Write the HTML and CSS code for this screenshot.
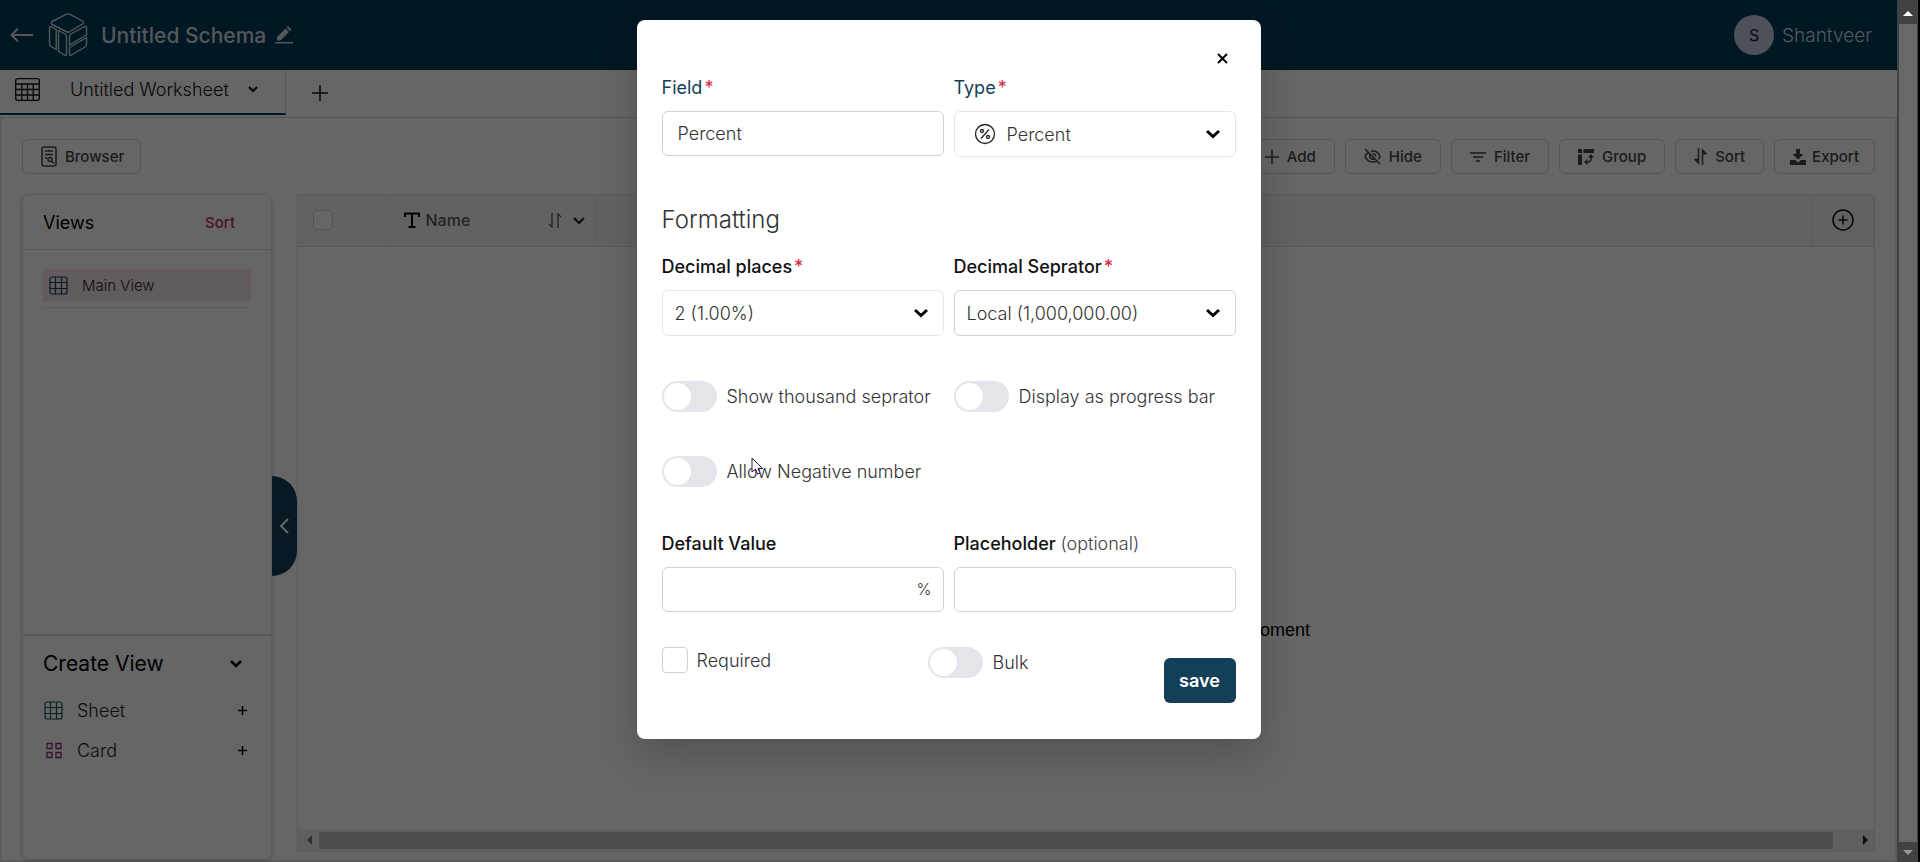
FILE: index.html
```html
<!DOCTYPE html>
<html lang="en">
<head>
  <meta charset="UTF-8" />
  <meta name="viewport" content="width=device-width, initial-scale=1" />
  <title>Untitled Schema</title>
  <link rel="stylesheet" href="styles.css">
</head>
<body>
  <div class="app">
    <header class="topbar">
      <button type="button" class="icon-btn" aria-label="Back">
        <svg width="24" height="16" viewBox="0 0 24 16" fill="none" stroke="currentColor" stroke-width="2"><path d="M23 8H2M8 1.5L1.5 8L8 14.5"/></svg>
      </button>
      <svg class="logo" width="40" height="44" viewBox="0 0 40 44" fill="none" stroke="currentColor" stroke-width="1.4" stroke-linejoin="round">
        <path d="M18.5 1.2Q20 .5 21.5 1.2L34.5 8Q36.5 9.500 34.500 11L21 19Q20 19.500 19 19L4 11.500Q2.500 10 4 8.500Z"/>
        <path d="M1.500 15Q1.500 13.200 3 13.800L8.200 16.500V36.500L3 33.500Q1.500 32.500 1.500 31Z"/>
        <path d="M10.500 17.500L17 21Q18.500 22 18.500 24V41Q18.500 43 16.500 42L10.500 38.500Z"/>
        <path d="M21.500 23.500Q21.500 22 23 21L36.500 13.500Q38.500 12.800 38.500 15V22L21.500 32Z"/>
        <path d="M21.500 34.500L38.500 24.500V31Q38.500 33 37 34L23.500 42Q21.500 42.800 21.500 41Z"/>
      </svg>
      <h1>Untitled Schema</h1>
      <button type="button" class="icon-btn" aria-label="Rename">
        <svg width="18" height="18" viewBox="0 0 18 18" fill="currentColor"><path d="M2 14.500V11L10.500 2.500L14 6L5.500 14.500ZM11.500 1.500L13 0L16.500 3.500L15 5ZM0 16H18V17.600H0Z"/></svg>
      </button>
      <div class="user">
        <span class="avatar">S</span>
        <span>Shantveer</span>
      </div>
    </header>

    <nav class="tabs">
      <div class="tab">
        <svg width="25" height="23" viewBox="0 0 25 23" fill="none" stroke="currentColor" stroke-width="1.3"><rect x=".7" y=".7" width="23.600" height="21.600" rx="2"/><path d="M1 6H24M1 11.500H24M1 17H24M6.800 6V22M12.500 6V22M18.200 6V22"/></svg>
        <span class="tab-name">Untitled Worksheet</span>
        <svg width="10" height="7" viewBox="0 0 10 7" fill="none" stroke="#000" stroke-width="2"><path d="M1 1L5 5L9 1"/></svg>
      </div>
      <button type="button" class="icon-btn add-tab" aria-label="Add worksheet">
        <svg width="16" height="16" viewBox="0 0 16 16" stroke="currentColor" stroke-width="1.500"><path d="M8 0V16M0 8H16"/></svg>
      </button>
    </nav>

    <main class="content">
      <div class="toolbar">
        <button type="button" class="tool browser">
          <svg width="16" height="21" viewBox="0 0 16 21" fill="none" stroke="currentColor" stroke-width="1.500"><rect x="1" y="1" width="14" height="19" rx="2"/><path d="M4 5H12M4 8.500H12M4 12H6"/><circle cx="9" cy="13.500" r="2"/><path d="M10.500 15L13 17.500"/></svg>
          Browser
        </button>
        <div class="tool-group">
          <button type="button" class="tool">
            <svg width="14" height="14" viewBox="0 0 14 14" stroke="currentColor" stroke-width="1.500"><path d="M7 0V14M0 7H14"/></svg>
            Add
          </button>
          <button type="button" class="tool">
            <svg width="17" height="17" viewBox="0 0 17 17" fill="none" stroke="currentColor" stroke-width="1.500"><path d="M1 1L16 16M5 4Q2 5.500 1 8.500Q3.500 14 8.500 14Q11 14 12.500 12.800M6.800 3.200Q13.500 2 16 8.500Q15.500 10 14.200 11.300M6 6.500Q5 9 7 10.700Q8.500 11.800 10.300 10.800M8.500 5.400Q11.500 5.700 11.600 8.500"/></svg>
            Hide
          </button>
          <button type="button" class="tool">
            <svg width="16" height="10" viewBox="0 0 16 10" stroke="currentColor" stroke-width="1.500"><path d="M0 1H16M3 5H13M6 9H10"/></svg>
            Filter
          </button>
          <button type="button" class="tool">
            <svg width="16" height="16" viewBox="0 0 16 16" fill="currentColor"><path d="M0 0H4V4H0ZM5.500 0H16V4H5.500ZM0 5.500H4V16H0Z"/><path d="M13 6.500V10Q13 13 9 13H7" fill="none" stroke="currentColor" stroke-width="1.500"/><path d="M10 8.500L13 5L16 8.500ZM9.500 10V16L6 13Z"/></svg>
            Group
          </button>
          <button type="button" class="tool">
            <svg width="13" height="17" viewBox="0 0 13 17" fill="currentColor" stroke="currentColor" stroke-width="1.500"><path d="M4.500 0V15L1 11.500H4.500M8.500 17V2L12 5.500H8.500"/></svg>
            Sort
          </button>
          <button type="button" class="tool export">
            <svg width="16" height="16" viewBox="0 0 16 16" fill="currentColor"><path d="M6 0H10V5H13.500L8 10.500L2.500 5H6ZM0 11H5L8 13.500L11 11H16V16H0Z"/></svg>
            Export
          </button>
        </div>
      </div>

      <div class="workspace">
        <aside class="sidebar">
          <div class="views-head">
            <h2>Views</h2>
            <button type="button" class="link-btn">Sort</button>
          </div>
          <div class="views-list">
            <a href="#" class="view-item">
              <svg width="19" height="19" viewBox="0 0 19 19" fill="none" stroke="#143f59" stroke-width="1.200"><rect x="1" y="1" width="17" height="17" rx="2"/><path d="M1 6.500H18M1 12.500H18M6.500 1V18M12.500 1V18"/></svg>
              Main View
            </a>
          </div>
          <div class="create">
            <div class="create-head">
              <h3>Create View</h3>
              <svg width="12" height="9" viewBox="0 0 12 9" fill="none" stroke="#000" stroke-width="2.500"><path d="M1 2L6 7L11 2"/></svg>
            </div>
            <div class="create-row">
              <svg width="19" height="19" viewBox="0 0 19 19" fill="none" stroke="#14505a" stroke-width="1.200"><rect x="1" y="1" width="17" height="17" rx="2"/><path d="M1 6.500H18M1 12.500H18M6.500 1V18M12.500 1V18"/></svg>
              <span>Sheet</span>
              <button type="button" class="icon-btn" aria-label="Create sheet"><svg width="9" height="9" viewBox="0 0 9 9" stroke="#000" stroke-width="1.500"><path d="M4.500 0V9M0 4.500H9"/></svg></button>
            </div>
            <div class="create-row">
              <svg width="19" height="19" viewBox="0 0 19 19" fill="none" stroke="#8c2c78" stroke-width="1.300"><path d="M3 2.500H8V7.500H3ZM12 2.500H17V7.500H12ZM3 11.500H8V16.500H3ZM12 11.500H17V16.500H12Z"/></svg>
              <span>Card</span>
              <button type="button" class="icon-btn" aria-label="Create card"><svg width="9" height="9" viewBox="0 0 9 9" stroke="#000" stroke-width="1.500"><path d="M4.500 0V9M0 4.500H9"/></svg></button>
            </div>
          </div>
        </aside>

        <button type="button" class="collapse" aria-label="Collapse views">
          <svg width="10" height="16" viewBox="0 0 10 16" fill="none" stroke="#fff" stroke-width="2"><path d="M9 1L2 8L9 15"/></svg>
        </button>

        <section class="sheet">
          <table class="grid">
            <thead>
              <tr>
                <th class="col-check"><input type="checkbox" class="check small" aria-label="Select all rows"></th>
                <th class="col-name">
                  <div class="name-cell">
                    <svg width="16" height="16" viewBox="0 0 16 16" fill="none" stroke="#000" stroke-width="2"><path d="M1 5V1.500H15V5M8 1.500V15M4.500 15H11.500"/></svg>
                    <span>Name</span>
                    <svg width="14" height="15" viewBox="0 0 14 15" fill="none" stroke="currentColor" stroke-width="1.300"><path d="M4 0V14L1 11M10 15V1L13 4"/></svg>
                    <svg width="12" height="9" viewBox="0 0 12 9" fill="none" stroke="#222" stroke-width="2.200"><path d="M1 2L6 7L11 2"/></svg>
                  </div>
                </th>
                <th></th>
                <th class="col-add">
                  <button type="button" class="icon-btn" aria-label="Add field">
                    <svg width="22" height="22" viewBox="0 0 22 22" fill="none" stroke="#111" stroke-width="1.500"><circle cx="11" cy="11" r="10"/><path d="M11 6.500V15.500M6.500 11H15.500"/></svg>
                  </button>
                </th>
              </tr>
            </thead>
          </table>
          <p class="empty">There are no records available to display at this moment</p>
          <div class="hscroll">
            <span class="arrow-left"></span>
            <span class="hthumb"></span>
            <span class="arrow-right"></span>
          </div>
        </section>
      </div>
    </main>

    <div class="overlay">
      <form class="modal" novalidate>
        <div class="modal-close">
          <button type="button" class="icon-btn" aria-label="Close">
            <svg width="11" height="11" viewBox="0 0 11 11" stroke="#000" stroke-width="2"><path d="M1 1L10 10M10 1L1 10"/></svg>
          </button>
        </div>

        <div class="grid-2">
          <div>
            <label class="label blue" for="field">Field<span class="req">*</span></label>
            <input id="field" class="control strong" type="text" value="Percent" autocomplete="off">
          </div>
          <div>
            <label class="label blue" for="type">Type<span class="req">*</span></label>
            <div class="select-wrap">
              <select id="type" class="control with-icon"><option>Percent</option></select>
              <svg class="type-icon" width="22" height="22" viewBox="0 0 22 22" fill="none" stroke="#222" stroke-width="1.300"><circle cx="11" cy="11" r="9.500"/><circle cx="8" cy="8" r="1.500"/><circle cx="14" cy="14" r="1.500"/><path d="M15 6.500L7 15.500"/></svg>
              <svg class="chevron" width="14" height="10" viewBox="0 0 14 10" fill="none" stroke="#000" stroke-width="3"><path d="M1 2L7 7.500L13 2"/></svg>
            </div>
          </div>
        </div>

        <h2 class="section-title">Formatting</h2>

        <div class="grid-2">
          <div>
            <label class="label" for="places">Decimal places<span class="req">*</span></label>
            <div class="select-wrap">
              <select id="places" class="control"><option>2 (1.00%)</option></select>
              <svg class="chevron" width="14" height="10" viewBox="0 0 14 10" fill="none" stroke="#000" stroke-width="3"><path d="M1 2L7 7.500L13 2"/></svg>
            </div>
          </div>
          <div>
            <label class="label" for="separator">Decimal Seprator<span class="req">*</span></label>
            <div class="select-wrap">
              <select id="separator" class="control strong"><option>Local (1,000,000.00)</option></select>
              <svg class="chevron" width="14" height="10" viewBox="0 0 14 10" fill="none" stroke="#000" stroke-width="3"><path d="M1 2L7 7.500L13 2"/></svg>
            </div>
          </div>
        </div>

        <div class="grid-2 toggles">
          <label class="toggle-row"><input type="checkbox" class="toggle">Show thousand seprator</label>
          <label class="toggle-row"><input type="checkbox" class="toggle">Display as progress bar</label>
          <label class="toggle-row"><input type="checkbox" class="toggle">Allow Negative number</label>
        </div>

        <div class="grid-2">
          <div>
            <label class="label" for="default">Default Value</label>
            <div class="select-wrap">
              <input id="default" class="control strong" type="text" autocomplete="off">
              <span class="suffix">%</span>
            </div>
          </div>
          <div>
            <label class="label" for="placeholder">Placeholder <span class="optional">(optional)</span></label>
            <input id="placeholder" class="control strong" type="text" autocomplete="off">
          </div>
        </div>

        <div class="modal-foot">
          <label class="required"><input type="checkbox" class="check">Required</label>
          <label class="toggle-row"><input type="checkbox" class="toggle">Bulk</label>
          <button type="submit" class="save">save</button>
        </div>

        <svg class="cursor" width="14" height="19" viewBox="0 0 14 19" fill="#fff" stroke="#1f1b4d" stroke-width="1"><path d="M1 1V15L4.500 12L6.500 17L9 16L7 11.500H11.500Z"/></svg>
      </form>
    </div>
  </div>

  <div class="vscroll">
    <span class="arrow-up"></span>
    <span class="vthumb"></span>
    <span class="arrow-down"></span>
  </div>
</body>
</html>
```

FILE: styles.css
```css
/* Reset and base */
* {
  box-sizing: border-box;
}
body {
  margin: 0;
  display: flex;
  height: 100vh;
  overflow: hidden;
  font-family: Inter, "Open Sans", sans-serif;
  font-size: 18px;
  font-weight: 300;
  color: #222;
  background: #000;
}
h1, h2, h3, p {
  margin: 0;
}
svg {
  display: block;
  flex: none;
}
button, input, select {
  font: inherit;
  color: inherit;
}
button {
  cursor: pointer;
}
.icon-btn {
  display: flex;
  padding: 0;
  border: none;
  background: none;
}
.app {
  position: relative;
  flex: 1;
  display: flex;
  flex-direction: column;
  background: #fff;
}

/* Header */
.topbar {
  height: 70px;
  padding: 0 25px 0 10px;
  display: flex;
  align-items: center;
  background: #003c5a;
  color: #d5dae2;
}
.logo {
  margin: 0 13px 0 14px;
}
.topbar h1 {
  margin-right: 9px;
  font-size: 21px;
  font-weight: 500;
}
.user {
  margin-left: auto;
  display: flex;
  align-items: center;
  gap: 8px;
  font-size: 19px;
}
.avatar {
  width: 40px;
  height: 40px;
  border-radius: 50%;
  background: #c3c9e0;
  color: #111827;
  font-size: 16px;
  font-weight: 400;
  line-height: 40px;
  text-align: center;
}

/* Worksheet tabs */
.tabs {
  height: 48px;
  display: flex;
  border-bottom: 1px solid #d1d5db;
}
.tab {
  width: 286px;
  height: 45px;
  padding: 0 27px 5px 15px;
  display: flex;
  align-items: center;
  border-bottom: 2px solid #003c5a;
  border-right: 1px solid #d1d5db;
  color: #111;
}
.tab-name {
  flex: 1;
  padding-left: 30px;
}
.add-tab {
  align-items: center;
  padding: 0 0 2px 26px;
  color: #111;
}

/* Toolbar */
.content {
  flex: 1;
  min-height: 0;
  display: flex;
  flex-direction: column;
  padding: 21px 20px 0;
  border: 2px solid #e5e7eb;
  border-top: none;
}
.toolbar {
  display: flex;
  justify-content: space-between;
}
.tool-group {
  display: flex;
  gap: 10px;
}
.tool {
  height: 35px;
  padding: 0 18px;
  display: flex;
  align-items: center;
  gap: 8px;
  border: 1px solid #d1d5db;
  border-radius: 6px;
  background: #fff;
  color: #444;
  font-size: 15px;
  font-weight: 500;
}
.browser {
  padding: 0 16px 0 18px;
}
.export {
  padding: 0 15px;
  gap: 6px;
}

/* Sidebar */
.workspace {
  flex: 1;
  min-height: 0;
  display: flex;
  margin-top: 20px;
}
.sidebar {
  width: 250px;
  display: flex;
  flex-direction: column;
  border: 1px solid #e5e7eb;
  border-radius: 8px;
  box-shadow: 0 2px 4px rgba(0, 0, 0, 0.2);
}
.views-head {
  height: 55px;
  padding: 0 36px 0 20px;
  display: flex;
  align-items: center;
  justify-content: space-between;
  border-bottom: 1px solid #d9dbdf;
}
.views-head h2 {
  font-size: 18px;
  font-weight: 400;
  color: #000;
}
.link-btn {
  padding: 0;
  border: none;
  background: none;
  color: #c8285a;
  font-size: 15px;
  font-weight: 500;
}
.views-list {
  flex: 1;
  padding: 19px 20px;
}
.view-item {
  height: 33px;
  padding: 0 6px;
  display: flex;
  align-items: center;
  gap: 14px;
  background: #f5e6ea;
  color: #222;
  font-size: 15px;
  text-decoration: none;
  box-shadow: 0 5px 0 #fff, 0 6px 0 #e5e7eb;
}
.create {
  height: 225px;
  padding: 12px 20px 0;
  border-top: 2px solid #d9dbdf;
}
.create-head {
  height: 30px;
  padding-right: 9px;
  display: flex;
  align-items: center;
  justify-content: space-between;
}
.create-head h3 {
  font-size: 21px;
  font-weight: 400;
  color: #000;
}
.create-row {
  height: 40px;
  padding: 0 4px 0 1px;
  display: flex;
  align-items: center;
  gap: 14px;
}
.create-head + .create-row {
  margin-top: 12px;
}
.create-row span {
  flex: 1;
}
.collapse {
  align-self: flex-start;
  width: 25px;
  height: 100px;
  margin-top: 282px;
  padding: 0 0 0 7px;
  border: none;
  border-radius: 0 25px 25px 0;
  background: #143f59;
}

/* Table */
.sheet {
  flex: 1;
  display: flex;
  flex-direction: column;
  margin-bottom: 8px;
  border: 1px solid #e5e7eb;
}
.grid {
  width: 100%;
  table-layout: fixed;
  border-collapse: collapse;
  background: #f6f6f6;
}
.grid th {
  height: 51px;
  padding: 0;
  border-right: 1px solid #e5e7eb;
  border-bottom: 1px solid #dcdcdc;
  text-align: left;
}
.col-check {
  width: 88px;
}
.col-check .check {
  display: block;
  margin-left: 15px;
}
.col-name {
  width: 210px;
}
.name-cell {
  display: flex;
  align-items: center;
  gap: 6px;
  padding: 0 11px 0 17px;
  color: #555;
  font-size: 16px;
  font-weight: 500;
}
.name-cell span {
  flex: 1;
}
.name-cell svg:last-child {
  margin-left: 5px;
}
.col-add {
  width: 62px;
}
.col-add .icon-btn {
  margin: 0 auto;
}
.empty {
  flex: 1;
  display: flex;
  align-items: center;
  justify-content: center;
  padding-top: 186px;
  font-family: "Liberation Sans", Arial, sans-serif;
  font-size: 18px;
  font-weight: 400;
  color: #000;
}
.hscroll {
  height: 22px;
  padding: 0 6px 0 9px;
  display: flex;
  align-items: center;
  background: #f1f1f1;
}
.arrow-left, .arrow-right {
  border: 5px solid transparent;
  border-left-width: 0;
  border-right: 5px solid #777;
}
.arrow-right {
  border-left: 5px solid #222;
  border-right-width: 0;
}
.hthumb {
  flex: 1;
  height: 17px;
  margin: 0 30px 0 7px;
  background: #bdbdbd;
}

/* Modal */
.overlay {
  position: absolute;
  inset: 0;
  padding: 20px;
  display: flex;
  justify-content: center;
  align-items: flex-start;
  background: rgba(0, 0, 0, 0.6);
}
.modal {
  position: relative;
  width: 100%;
  max-width: 624px;
  padding: 26px 25px 36px;
  border-radius: 8px;
  background: #fff;
  box-shadow: 0 16px 40px rgba(0, 0, 0, 0.2);
}
.modal-close {
  height: 30px;
  padding: 7px 8px 0;
  display: flex;
  justify-content: flex-end;
}
.grid-2 {
  display: grid;
  grid-template-columns: 1fr 1fr;
  gap: 44px 10px;
}
.label {
  display: block;
  margin-bottom: 11px;
  font-size: 18px;
  font-weight: 500;
  line-height: 24px;
  color: #111;
}
.blue {
  color: #143f59;
  font-weight: 400;
}
.req {
  margin-left: 2px;
  color: #dc2646;
}
.optional {
  font-weight: 300;
  color: #444;
}
.control {
  display: block;
  width: 100%;
  height: 46px;
  padding: 0 15px;
  border: 1px solid #e5e7eb;
  border-radius: 6px;
  background: #fff;
  color: #333;
  font-size: 18px;
}
input.control {
  height: 45px;
}
select.control {
  appearance: none;
  padding: 0 12px;
}
.strong {
  border-color: #cfd1d6;
}
.select-wrap {
  position: relative;
}
select.with-icon {
  padding-left: 52px;
}
.type-icon {
  position: absolute;
  left: 20px;
  top: 12px;
  pointer-events: none;
}
.chevron {
  position: absolute;
  right: 16px;
  top: 18px;
  pointer-events: none;
}
.suffix {
  position: absolute;
  right: 12px;
  top: 12px;
  font-size: 16px;
  color: #333;
}
.section-title {
  margin: 47px 0 19px;
  font-size: 24px;
  font-weight: 300;
  line-height: 32px;
  color: #333;
}
.toggles {
  margin: 45px 0;
}
.toggle-row {
  display: flex;
  align-items: center;
  gap: 10px;
  color: #333;
  white-space: nowrap;
}
.toggle {
  appearance: none;
  flex: none;
  width: 55px;
  height: 31px;
  margin: 0;
  padding: 2px;
  border-radius: 16px;
  background: #e4e5ea;
}
.toggle::before {
  content: "";
  display: block;
  width: 27px;
  height: 27px;
  border-radius: 50%;
  background: #fff;
}
.toggle:checked::before {
  margin-left: auto;
}
.check {
  appearance: none;
  width: 26px;
  height: 26px;
  margin: 0;
  border: 1px solid #cfd1d6;
  border-radius: 4px;
  background: #fff;
}
.check:checked {
  background: #143f59;
}
.small {
  width: 20px;
  height: 20px;
}
.modal-foot {
  height: 56px;
  margin-top: 35px;
  display: flex;
  align-items: flex-start;
}
.required {
  width: 266px;
  display: flex;
  align-items: center;
  gap: 9px;
  color: #333;
}
.save {
  align-self: flex-end;
  margin-left: auto;
  height: 45px;
  width: 72px;
  padding: 0;
  border: none;
  border-radius: 6px;
  background: #143f59;
  color: #fff;
  font-weight: 600;
}
.cursor {
  position: absolute;
  left: 114px;
  top: 437px;
}

/* Window scrollbar */
.vscroll {
  width: 21px;
  margin-right: 2px;
  padding: 11px 1px 7px 2px;
  display: flex;
  flex-direction: column;
  align-items: center;
  background: #424242;
}
.arrow-up, .arrow-down {
  border: 5px solid transparent;
  border-top-width: 0;
  border-bottom: 5px solid #fff;
}
.arrow-down {
  border-top: 5px solid #9a9a9a;
  border-bottom-width: 0;
}
.vthumb {
  flex: 1;
  width: 100%;
  margin: 8px 0;
  background: #686868;
}
```
